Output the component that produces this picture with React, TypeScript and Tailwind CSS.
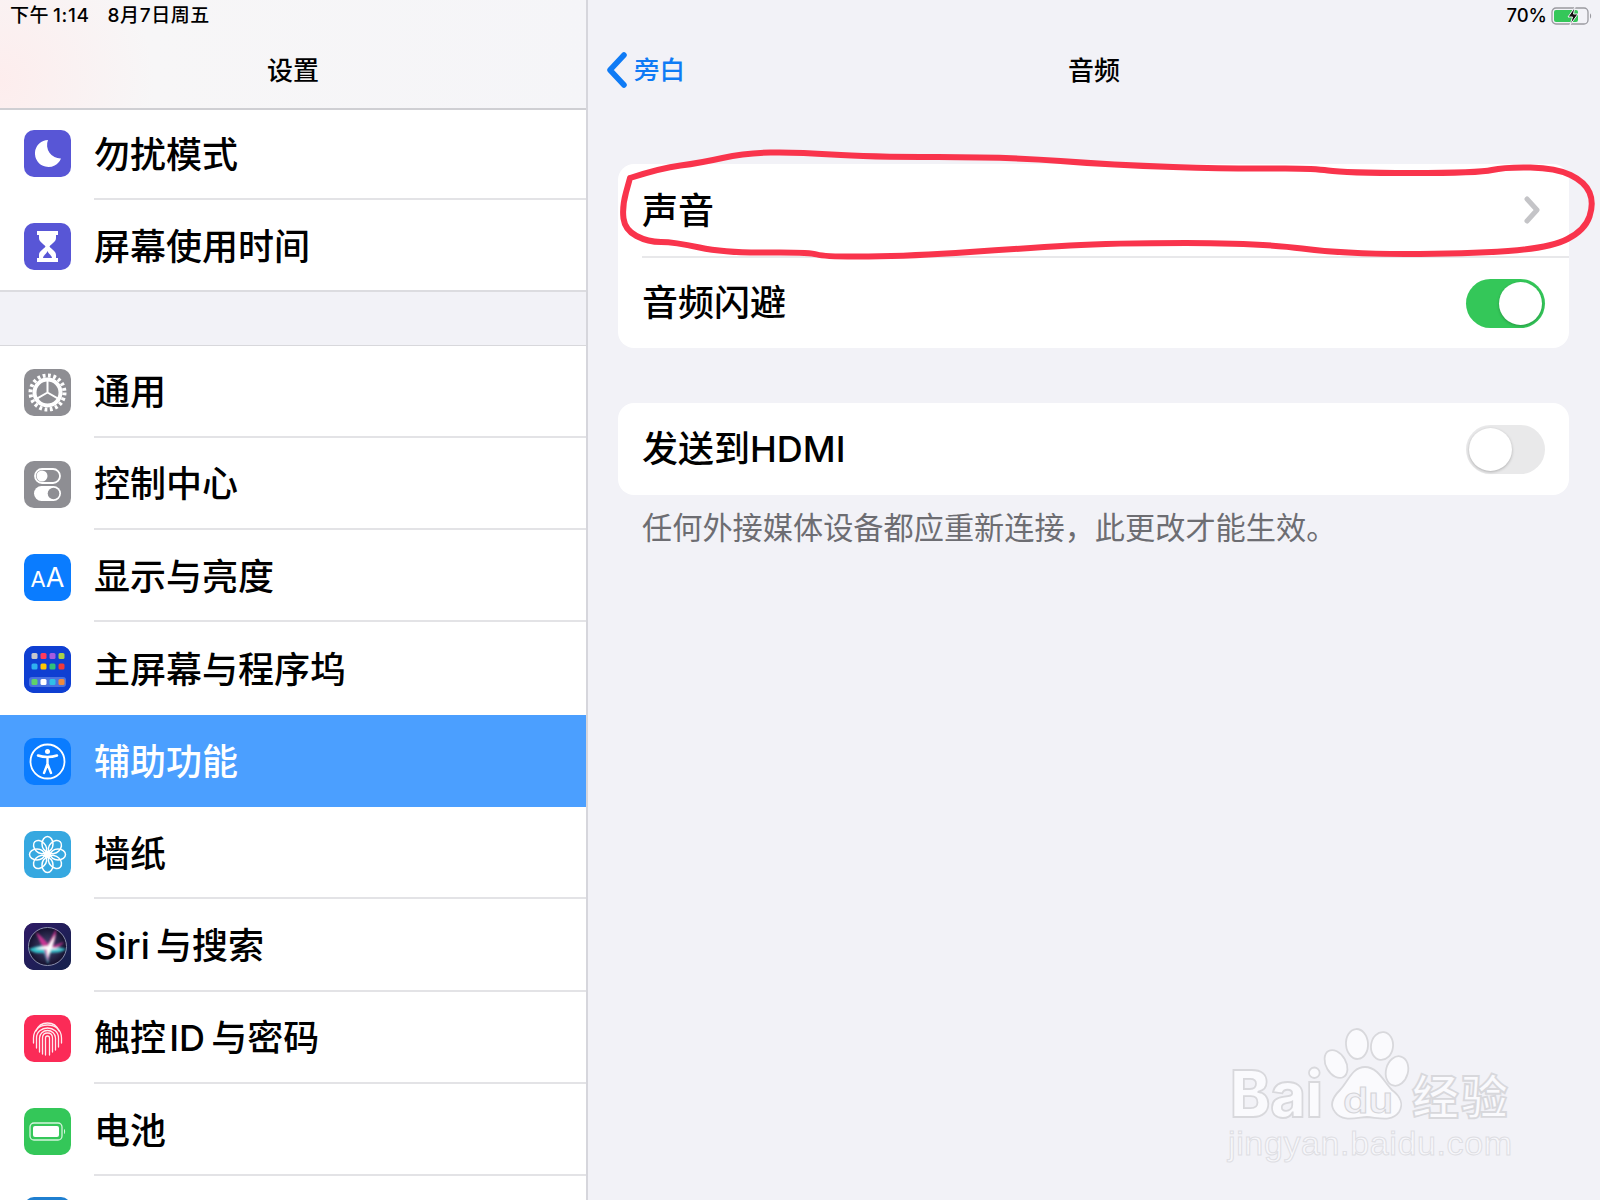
import type { ReactNode } from 'react';

const cjk = "font-['Inter','Noto_Sans_CJK_SC',sans-serif]";

function IconBox({ bg, children }: { bg: string; children: ReactNode }) {
  return (
    <div className={`w-[47px] h-[47px] rounded-[10px] shrink-0 flex items-center justify-center overflow-hidden ${bg}`}>
      {children}
    </div>
  );
}

function Moon() {
  return (
    <svg width="47" height="47" viewBox="0 0 47 47">
      <path d="M24 10A13.500 13.500 0 1 0 37 28.500 13.500 13.500 0 0 1 24 10z" fill="#fff" />
    </svg>
  );
}

function Hourglass() {
  return (
    <svg width="47" height="47" viewBox="0 0 47 47">
      <path d="M13 8h21v4h-2v3c0 4-5 6-6.500 8.500C27 26 32 28 32 32v3h2v4H13v-4h2v-3c0-4 5-6 6.500-8.500C20 21 15 19 15 15v-3h-2z" fill="#fff" />
      <path d="M19 35c.5-3 3.500-4 4.500-7 1 3 4 4 4.500 7z" fill="#5856d6" />
    </svg>
  );
}

function Gear() {
  return (
    <svg width="47" height="47" viewBox="0 0 47 47">
      <circle cx="23.500" cy="23.500" r="17" fill="none" stroke="#fff" strokeWidth="4" strokeDasharray="2.800 2.540" />
      <circle cx="23.500" cy="23.500" r="13" fill="none" stroke="#fff" strokeWidth="4" />
      <path d="M23.500 23.500V11M23.500 23.500l11 6.300M23.500 23.500l-11 6.300" stroke="#fff" strokeWidth="2" fill="none" />
    </svg>
  );
}

function Switches() {
  return (
    <svg width="47" height="47" viewBox="0 0 47 47">
      <rect x="11" y="8" width="25" height="14" rx="7" fill="none" stroke="#fff" strokeWidth="1.800" />
      <circle cx="18" cy="15" r="5.500" fill="#fff" />
      <rect x="10" y="25" width="27" height="15" rx="7.500" fill="#fff" />
      <circle cx="29.500" cy="32.500" r="5.800" fill="#8e8e93" />
    </svg>
  );
}

function HomeGrid() {
  const dots = ['#c7c7cc', '#ff3b5c', '#a45be0', '#a8d04a', '#2fb0f0', '#ffc700', '#30c07a', '#f03a3a'];
  const dock = ['#5fd36a', '#ffffff', '#2fc0e8', '#f08a3c'];
  return (
    <svg width="47" height="47" viewBox="0 0 47 47">
      <rect width="47" height="47" fill="#0f3fd2" />
      {dots.map((c, i) => (
        <rect key={i} x={7.500 + (i % 4) * 9} y={7 + Math.floor(i / 4) * 10.500} width="6" height="6" rx="1.500" fill={c} />
      ))}
      <rect x="5" y="31" width="37" height="10" rx="3" fill="#4a73e0" />
      {dock.map((c, i) => (
        <rect key={i} x={7.500 + i * 9} y="33" width="6" height="6" rx="1.500" fill={c} />
      ))}
    </svg>
  );
}

function Accessibility() {
  return (
    <svg width="47" height="47" viewBox="0 0 47 47">
      <circle cx="23.500" cy="23.500" r="17" fill="none" stroke="#fff" strokeWidth="1.800" />
      <circle cx="23.500" cy="13.500" r="2.500" fill="#fff" />
      <path d="M14 17.500c3 1 6 1.500 9.500 1.500s6.500-.5 9.500-1.500M23.500 19v7M23.500 26l-3.500 9M23.500 26l3.500 9" stroke="#fff" strokeWidth="2.400" strokeLinecap="round" fill="none" />
    </svg>
  );
}

function Flower() {
  const petals = [0, 45, 90, 135, 180, 225, 270, 315];
  return (
    <svg width="47" height="47" viewBox="0 0 47 47">
      {petals.map((a) => (
        <ellipse key={a} cx="23.500" cy="13" rx="5.500" ry="7.500" fill="none" stroke="#fff" strokeWidth="1.500" transform={`rotate(${a} 23.500 23.500)`} />
      ))}
      <circle cx="23.500" cy="23.500" r="2.800" fill="#fff" />
    </svg>
  );
}

function Siri() {
  return (
    <svg width="47" height="47" viewBox="0 0 47 47">
      <defs>
        <linearGradient id="siriBg" x1="0" y1="0" x2="1" y2="1">
          <stop offset="0" stopColor="#2f1a66" />
          <stop offset="1" stopColor="#14224c" />
        </linearGradient>
        <radialGradient id="siriBall">
          <stop offset="0" stopColor="#4a4d78" />
          <stop offset="1" stopColor="#14102e" />
        </radialGradient>
        <filter id="siriBlur">
          <feGaussianBlur stdDeviation="0.800" />
        </filter>
      </defs>
      <rect width="47" height="47" fill="url(#siriBg)" />
      <circle cx="23.500" cy="23.500" r="19" fill="url(#siriBall)" stroke="#8a8fac" strokeWidth="1" />
      <g filter="url(#siriBlur)">
        <path d="M5 26c8-3 14-4 18-4 5 1 12 2 19 4-6 5-13 3-16 4l-2 11c-2-5-3-9-4-11-4 0-10 1-15-4z" fill="#35d0d8" opacity="0.9" />
        <path d="M12 9c5 4 9 8 12 12l8-15c0 7-1 12-3 17l11-4c-4 5-10 7-14 8l-2 12c-2-6-3-11-4-13-3-5-6-11-8-17z" fill="#e0359c" opacity="0.85" />
        <path d="M23.500 23.500l8-12-3.500 13 10 1.500-11 .5-3 9-1.500-9-12-1 12-2.500z" fill="#ffffff" />
      </g>
    </svg>
  );
}

function Fingerprint() {
  return (
    <svg width="47" height="47" viewBox="0 0 47 47" fill="none" stroke="#fff" strokeWidth="1.300" strokeLinecap="round" opacity="0.9">
      <path d="M12 16c2-5 6-8 11.500-8S33 11 35 16" />
      <path d="M9.500 28v-5c0-8 6-13 14-13s14 5 14 13v5" />
      <path d="M12.500 33V23c0-6 5-10 11-10s11 4 11 10v9" />
      <path d="M15.500 37V23c0-4 3.500-7.500 8-7.500s8 3.500 8 7.500v12" />
      <path d="M18.500 39V23c0-3 2-5 5-5s5 2 5 5v14" />
      <path d="M21.500 40V23c0-1 1-2 2-2s2 1 2 2v17" />
    </svg>
  );
}

function BatteryIcon() {
  return (
    <svg width="47" height="47" viewBox="0 0 47 47">
      <rect x="6" y="15" width="32" height="17" rx="4" fill="none" stroke="#fff" strokeWidth="1.300" opacity="0.8" />
      <rect x="9" y="18" width="26" height="11" rx="2" fill="#fff" />
      <path d="M40 21c1.500.5 1.500 4.500 0 5z" fill="#fff" opacity="0.8" />
    </svg>
  );
}

type Item = {
  label: string;
  icon: ReactNode;
  bg: string;
  active?: boolean;
  last?: boolean;
  h?: string;
  iconPad?: string;
  textPad?: string;
};

const topItems: Item[] = [
  { label: '勿扰模式', icon: <Moon />, bg: 'bg-[#5856d6]', h: 'h-[90px]', iconPad: 'pb-[3px]', textPad: 'pt-[1px]' },
  { label: '屏幕使用时间', icon: <Hourglass />, bg: 'bg-[#5856d6]', last: true, h: 'h-[90px]', iconPad: 'pt-[2px]', textPad: 'pt-[4px]' },
];

const mainItems: Item[] = [
  { label: '通用', icon: <Gear />, bg: 'bg-[#8e8e93]' },
  { label: '控制中心', icon: <Switches />, bg: 'bg-[#8e8e93]' },
  {
    label: '显示与亮度',
    icon: (
      <span className="font-['Inter',sans-serif] text-white text-[27px] leading-none">
        <span className="text-[22px]">A</span>A
      </span>
    ),
    bg: 'bg-[#0a7cff]',
  },
  { label: '主屏幕与程序坞', icon: <HomeGrid />, bg: 'bg-[#0f3fd2]', last: true },
  { label: '辅助功能', icon: <Accessibility />, bg: 'bg-[#0a7cff]', active: true, last: true },
  { label: '墙纸', icon: <Flower />, bg: 'bg-[#36a8e0]' },
  { label: 'Siri\u2009与搜索', icon: <Siri />, bg: 'bg-[#1c1a50]' },
  { label: '触控\u200aID\u2009与密码', icon: <Fingerprint />, bg: 'bg-[#fb2b57]' },
  { label: '电池', icon: <BatteryIcon />, bg: 'bg-[#34c759]' },
];

function Row({ item }: { item: Item }) {
  return (
    <div className={`flex items-stretch ${item.h ?? 'h-[92.3px]'} ${item.active ? 'bg-[#4b9fff]' : 'bg-white'}`}>
      <div className={`w-[94px] shrink-0 pl-[24px] flex items-center ${item.iconPad ?? 'pt-[2px]'}`}>
        <IconBox bg={item.bg}>{item.icon}</IconBox>
      </div>
      <div
        className={`flex-1 flex items-center text-[36px] font-medium leading-none ${item.textPad ?? 'pt-[3px]'} ${
          item.active ? 'text-white' : 'text-black'
        } ${item.last ? '' : 'border-b-2 border-[#e3e3e6]'}`}
      >
        {item.label}
      </div>
    </div>
  );
}

function Sidebar() {
  return (
    <aside className="w-[588px] shrink-0 h-full flex flex-col border-r-2 border-[#d6d6dc] bg-[#f2f2f7] overflow-hidden">
      <div className="h-[110px] shrink-0 px-[10px] flex flex-col border-b-2 border-[#cfcfd3] bg-[radial-gradient(circle_at_0%_75%,#fdeded_0%,#f7f6f7_26%,#f5f5f8_100%)]">
        <div className="h-[31px] flex items-center gap-[18px] text-[19px] font-medium tracking-[0.6px] text-black leading-none">
          <span>下午{'\u2009'}1:14</span>
          <span>8月7日周五</span>
        </div>
        <div className="flex-1 flex items-center justify-center pt-[2px] text-[26px] font-medium text-black leading-none">设置</div>
      </div>
      <div className="border-b-2 border-[#dcdce0]">
        {topItems.map((i) => (
          <Row key={i.label} item={i} />
        ))}
      </div>
      <div className="h-[52.500px] shrink-0" />
      <div className="border-t border-[#d8d8dc] bg-white">
        {mainItems.map((i) => (
          <Row key={i.label} item={i} />
        ))}
        <div className="pl-[24px] pt-[21px] bg-white h-[40px]">
          <div className="w-[47px] h-[47px] rounded-[10px] bg-[#1f7fd0]" />
        </div>
      </div>
    </aside>
  );
}

function Toggle({ on }: { on: boolean }) {
  return (
    <div className={`w-[79px] h-[49px] rounded-full p-[3px] flex ${on ? 'bg-[#34c759] justify-end' : 'bg-[#e9e9ea] justify-start'}`}>
      <div className="w-[43px] h-[43px] rounded-full bg-white shadow-[0_1px_3px_rgba(0,0,0,0.25)]" />
    </div>
  );
}

function Detail() {
  return (
    <main className="flex-1 h-full bg-[#f2f2f7] flex flex-col">
      <div className="h-[31px] shrink-0 flex items-center justify-end gap-[4px] pr-[8px]">
        <span className="text-[18.500px] font-medium text-black leading-none">70%</span>
        <svg width="41" height="18" viewBox="0 0 41 18">
          <rect x="1" y="1" width="36" height="16" rx="4" fill="none" stroke="#9a9aa0" strokeWidth="1.300" />
          <rect x="3" y="3" width="24" height="12" rx="2" fill="#34c759" />
          <path d="M39 6.500c1.500.5 1.500 4.500 0 5z" fill="#9a9aa0" />
          <path d="M24 0l-7 10h4.500L19 18l8-11h-4.500z" fill="#111" stroke="#f2f2f7" strokeWidth="1" />
        </svg>
      </div>
      <div className="relative h-[80px] shrink-0 flex items-center justify-center">
        <div className="absolute left-[18px] top-[21px] flex items-center gap-[6px] text-[#0f7bf5] text-[25.500px] font-medium leading-none">
          <svg width="22" height="36" viewBox="0 0 22 36">
            <path d="M18 3L4 18l14 15" fill="none" stroke="#0f7bf5" strokeWidth="5.500" strokeLinecap="round" strokeLinejoin="round" />
          </svg>
          <span>旁白</span>
        </div>
        <span className="text-[26px] font-medium text-black leading-none">音频</span>
      </div>
      <div className="mt-[53px] ml-[30px] mr-[31px] rounded-[16px] bg-white">
        <div className="h-[92px] pl-[24px] pr-[26px] pt-[2px] flex items-center justify-between">
          <span className="text-[36px] font-medium text-black leading-none">声音</span>
        </div>
        <div className="ml-[24px] flex items-center justify-between h-[92px] pr-[24px] border-t-2 border-[#e8e8ea]">
          <span className="text-[36px] font-medium text-black leading-none">音频闪避</span>
          <Toggle on />
        </div>
      </div>
      <div className="mt-[55px] ml-[30px] mr-[31px] rounded-[16px] bg-white h-[92px] px-[24px] flex items-center justify-between">
        <span className="text-[36px] font-medium text-black leading-none">发送到HDMI</span>
        <Toggle on={false} />
      </div>
      <p className="mt-[18px] ml-[54px] text-[30.200px] leading-none text-[#6d6d72]">任何外接媒体设备都应重新连接，此更改才能生效。</p>
    </main>
  );
}

// freehand red ring, points read off the screenshot
const ring = [
  [630, 178], [661, 168], [700, 163], [745, 153], [796, 152], [867, 157], [1009, 157], [1112, 165], [1234, 169], [1312, 168],
  [1344, 173], [1479, 173], [1505, 167], [1556, 168], [1585, 182], [1594, 203], [1585, 230], [1550, 248], [1466, 254], [1344, 254],
  [1260, 243], [1112, 243], [1028, 248], [912, 256], [825, 257], [809, 252], [725, 253], [674, 242], [648, 242], [625, 230],
  [622, 207], [630, 178],
];

function ringPath() {
  let d = `M${ring[0][0]} ${ring[0][1]}`;
  for (let i = 1; i < ring.length - 1; i++) {
    const mx = (ring[i][0] + ring[i + 1][0]) / 2;
    const my = (ring[i][1] + ring[i + 1][1]) / 2;
    d += ` Q${ring[i][0]} ${ring[i][1]} ${mx} ${my}`;
  }
  return d + ` L${ring[ring.length - 1][0]} ${ring[ring.length - 1][1]}`;
}

function Annotation() {
  return (
    <svg className="absolute left-0 top-0 pointer-events-none" width="1600" height="1200" viewBox="0 0 1600 1200">
      <path d="M1527 199l10 11-10 11" fill="none" stroke="#c4c4c7" strokeWidth="5" strokeLinecap="round" strokeLinejoin="round" />
      <path d={ringPath()} fill="none" stroke="#f9344c" strokeWidth="6" strokeLinecap="round" strokeLinejoin="round" />
    </svg>
  );
}

function Watermark() {
  const mark = { fill: '#fafafd', stroke: '#d8d8dc', strokeWidth: 1.800 };
  return (
    <svg className="absolute left-0 top-0 pointer-events-none" width="1600" height="1200" viewBox="0 0 1600 1200">
      <ellipse cx="1336" cy="1064" rx="10" ry="15" transform="rotate(-30 1336 1064)" {...mark} />
      <ellipse cx="1357" cy="1044" rx="11" ry="15" transform="rotate(-4 1357 1044)" {...mark} />
      <ellipse cx="1382" cy="1046" rx="11" ry="14" transform="rotate(8 1382 1046)" {...mark} />
      <ellipse cx="1397" cy="1071" rx="11" ry="15" transform="rotate(15 1397 1071)" {...mark} />
      <path d="M1365 1067C1352 1067 1348 1082 1340 1090C1332 1098 1330 1106 1335 1112C1342 1122 1355 1118 1367 1117C1380 1118 1392 1122 1399 1112C1404 1104 1400 1096 1392 1090C1384 1082 1378 1067 1365 1067z" {...mark} />
      <text x="1343" y="1113" textLength="50" lengthAdjust="spacingAndGlyphs" fontFamily="'Inter', sans-serif" fontWeight="600" fontSize="36" fill="#f2f2f7" stroke="#d4d4d8" strokeWidth="1">du</text>
      <text x="1230" y="1117" textLength="93" lengthAdjust="spacingAndGlyphs" fontFamily="'Inter', sans-serif" fontWeight="800" fontSize="64" {...mark}>Bai</text>
      <text x="1412" y="1114" textLength="96" fontFamily="'Noto Sans CJK SC', sans-serif" fontWeight="700" fontSize="47" {...mark}>经验</text>
      <text x="1228" y="1155" textLength="284" fontFamily="'Liberation Sans', sans-serif" fontSize="34" fill="#f7f7fb" stroke="#dedee3" strokeWidth="1">jingyan.baidu.com</text>
    </svg>
  );
}

export default function App() {
  return (
    <div className={`relative w-[1600px] h-[1200px] flex overflow-hidden ${cjk}`}>
      <Sidebar />
      <Detail />
      <Annotation />
      <Watermark />
    </div>
  );
}
